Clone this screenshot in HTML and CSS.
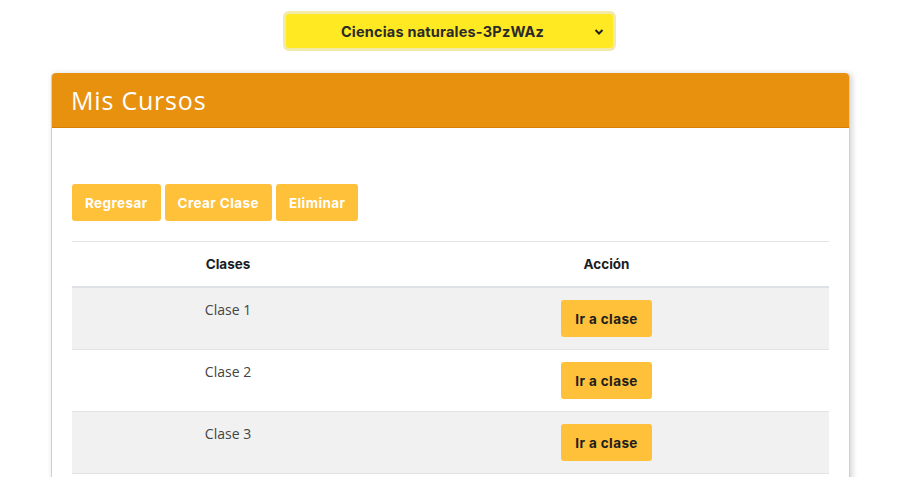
FILE: index.html
```html
<!DOCTYPE html>
<html lang="es">
<head>
<meta charset="utf-8">
<title>Mis Cursos</title>
<link rel="stylesheet" href="styles.css">
</head>
<body>
<div class="top">
  <div class="select">
    <span class="select-text">Ciencias naturales-3PzWAz</span>
    <svg class="chev" width="10" height="8" viewBox="0 0 10 8"><path d="M1.5 2 L5 5.5 L8.5 2" fill="none" stroke="#222" stroke-width="2"/></svg>
  </div>
</div>
<div class="card">
  <div class="card-header">Mis Cursos</div>
  <div class="card-body">
    <div class="actions">
      <button class="btn">Regresar</button>
      <button class="btn">Crear Clase</button>
      <button class="btn">Eliminar</button>
    </div>
    <table class="table">
      <thead>
        <tr><th class="c1">Clases</th><th class="c2">Acción</th></tr>
      </thead>
      <tbody>
        <tr class="odd"><td>Clase 1</td><td><button class="btn btn-dark">Ir a clase</button></td></tr>
        <tr><td>Clase 2</td><td><button class="btn btn-dark">Ir a clase</button></td></tr>
        <tr class="odd"><td>Clase 3</td><td><button class="btn btn-dark">Ir a clase</button></td></tr>
      </tbody>
    </table>
  </div>
</div>
</body>
</html>
```
FILE: styles.css
```css
html, body { margin: 0; padding: 0; background: #fff; }
body { font-family: "Open Sans", "Liberation Sans", sans-serif; color: #212529; overflow: hidden; height: 477px; }
.top { display: flex; justify-content: center; padding-top: 11px; }
.select {
  width: 327px; height: 34px; box-sizing: content-box;
  background: #ffe923; border: 3px solid #f2eaa8; border-radius: 6px;
  display: flex; align-items: center; position: relative; margin-left: 1px;
}
.select-text { flex: 1; text-align: center; font-family: "Inter", sans-serif; font-weight: 700; font-size: 14.5px; color: #2a2a2a; padding-right: 14px; letter-spacing: 0.2px; }
.chev { position: absolute; right: 9px; top: 14px; }
.card {
  margin: 22px 48px 0 51px; border-radius: 4px;
  border-left: 1px solid #d0d0d0; border-right: 1px solid #d0d0d0;
  box-shadow: 2px 1px 6px rgba(0,0,0,0.18);
  background: #fff; height: 420px;
}
.card-header {
  background: #e8910f; color: #fff; height: 55px; box-sizing: border-box;
  border-radius: 4px 4px 0 0; padding: 13px 19px 0;
  font-family: "Open Sans", sans-serif; font-size: 25px; line-height: 28px; letter-spacing: 0.8px;
  border-bottom: 1px solid #d57f05;
}
.card-body { padding: 56px 20px 0 20px; }
.actions { display: flex; gap: 4px; margin-bottom: 20px; }
.btn {
  background: #ffc03a; border: none; border-radius: 3px; color: #fff;
  font-family: "Inter", sans-serif; font-weight: 700; font-size: 13.5px;
  height: 37px; padding: 0 13px; letter-spacing: 0.4px;
}
.btn-dark { color: #1e1e1e; padding: 0; width: 91px; }
.table { width: 100%; border-collapse: collapse; }
.table th {
  font-family: "Inter", sans-serif; font-weight: 700; font-size: 13.5px; color: #1a1d24;
  height: 44px; border-top: 1px solid #e3e3e3; border-bottom: 2px solid #dee2e6; text-align: center; padding: 0;
}
.table .c1 { width: 312px; }
.table td {
  text-align: center; vertical-align: top; padding: 12px 0; height: 37px;
  border-bottom: 1px solid #e3e3e3; font-size: 14px; color: #444; line-height: 20px;
}
.odd td { background: #f1f1f1; }
```
